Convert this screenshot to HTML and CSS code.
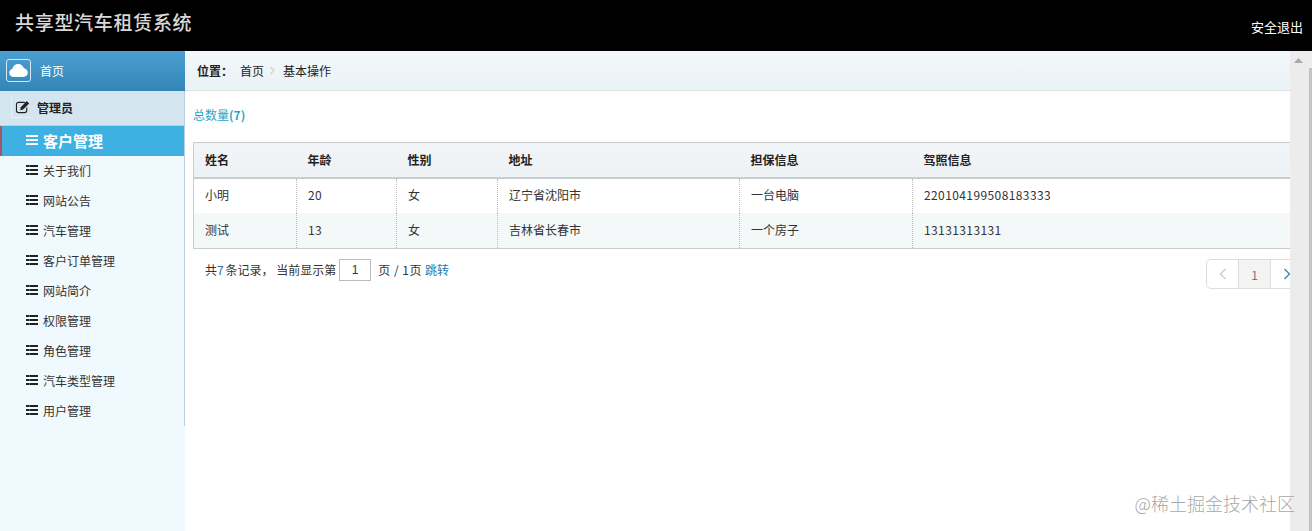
FILE: index.html
```html
<!DOCTYPE html>
<html lang="zh-CN">
<head>
<meta charset="utf-8">
<title>共享型汽车租赁系统</title>
<link rel="stylesheet" href="styles.css">
</head>
<body>
<header class="top">
  <h1 class="brand">共享型汽车租赁系统</h1>
  <a class="logout">安全退出</a>
</header>
<div class="frame">
  <aside class="side">
    <div class="side-home">
      <span class="cloud-box"><svg width="19" height="13" viewBox="0 0 20 14"><path fill="#fff" d="M5 14C2.200 14 0 12 0 9.400 0 7.200 1.500 5.500 3.500 5 4 2.200 6.600 0 9.700 0c2.900 0 5.300 1.800 6 4.400C18.200 5 20 7 20 9.500 20 12 18 14 15.300 14z"/></svg></span>
      <span>首页</span>
    </div>
    <div class="side-group">
      <svg class="edit-icon" viewBox="0 0 16 15"><path fill="none" stroke="#222" stroke-width="1.200" d="M10 2.500H3.200C2 2.500 1 3.500 1 4.700v6.600c0 1.200 1 2.200 2.200 2.200h6.600c1.200 0 2.200-1 2.200-2.200V8"/><path fill="#222" d="M5.600 7.800 12 1.200l2.600 2.600-6.500 6.500-3.100.6z"/></svg>
      <span>管理员</span>
    </div>
    <ul class="menu">
      <li class="menu-item active"><i class="list-icon"></i>客户管理</li>
      <li class="menu-item"><i class="list-icon"></i>关于我们</li>
      <li class="menu-item"><i class="list-icon"></i>网站公告</li>
      <li class="menu-item"><i class="list-icon"></i>汽车管理</li>
      <li class="menu-item"><i class="list-icon"></i>客户订单管理</li>
      <li class="menu-item"><i class="list-icon"></i>网站简介</li>
      <li class="menu-item"><i class="list-icon"></i>权限管理</li>
      <li class="menu-item"><i class="list-icon"></i>角色管理</li>
      <li class="menu-item"><i class="list-icon"></i>汽车类型管理</li>
      <li class="menu-item"><i class="list-icon"></i>用户管理</li>
    </ul>
  </aside>
  <main class="main">
    <div class="crumbs">
      <b class="crumb-label">位置：</b>
      <span>首页</span>
      <svg class="crumb-sep" width="5" height="9" viewBox="0 0 5 9"><path fill="none" stroke="#b5b5b5" d="M.5 1 4 4.500.5 8"/></svg>
      <span>基本操作</span>
    </div>
    <div class="content">
      <p class="total">总数量<b>(7)</b></p>
      <table class="grid">
        <thead>
          <tr><th class="c1">姓名</th><th class="c2">年龄</th><th class="c3">性别</th><th class="c4">地址</th><th class="c5">担保信息</th><th>驾照信息</th></tr>
        </thead>
        <tbody>
          <tr><td>小明</td><td class="digits">20</td><td>女</td><td>辽宁省沈阳市</td><td>一台电脑</td><td class="digits">220104199508183333</td></tr>
          <tr class="alt"><td>测试</td><td class="digits">13</td><td>女</td><td>吉林省长春市</td><td>一个房子</td><td class="digits">13131313131</td></tr>
        </tbody>
      </table>
      <div class="pager-row">
        <div class="pager-info">共<span class="num">7</span>条记录， 当前显示第<input class="page-input" value="1"><span class="page-text">页 / 1页</span><a class="jump">跳转</a></div>
        <div class="pager">
          <span class="pg"><svg width="8" height="12" viewBox="0 0 8 12"><path fill="none" stroke="#ccc" stroke-width="1.500" d="M6.500 1 1.500 6l5 5"/></svg></span>
          <span class="pg current">1</span>
          <span class="pg"><svg width="8" height="12" viewBox="0 0 8 12"><path fill="none" stroke="#3f8fc0" stroke-width="1.500" d="M1.500 1l5 5-5 5"/></svg></span>
        </div>
      </div>
    </div>
  </main>
  <div class="scrollbar">
    <svg class="scroll-arrow" width="9" height="5" viewBox="0 0 9 5"><path fill="#a9a9a9" d="M4.500 0 9 5H0z"/></svg>
    <div class="scroll-thumb"></div>
  </div>
</div>
<div class="watermark">@稀土掘金技术社区</div>
</body>
</html>
```
FILE: styles.css
```css
* { box-sizing: border-box; }
html, body { margin: 0; height: 100%; overflow: hidden; }
body {
  font-family: "Noto Sans CJK SC", "Liberation Sans", sans-serif;
  font-size: 12px;
  color: #222;
  background: #fff;
  display: flex;
  flex-direction: column;
}
.top {
  height: 51px;
  flex: none;
  background: #000;
  color: #fff;
  display: flex;
  justify-content: space-between;
  padding: 0 9px 0 15px;
}
.brand {
  margin: 9px 0 0;
  font-size: 19px;
  font-weight: 500;
  letter-spacing: .7px;
  line-height: 26px;
  color: #d8d8d8;
}
.logout { margin-top: 18px; font-size: 13px; line-height: 18px; }
.frame { flex: 1; display: flex; min-height: 0; }
.side {
  width: 185px;
  flex: none;
  background: #f0f9fd;
}
.side-home {
  height: 40px;
  display: flex;
  align-items: center;
  gap: 9px;
  padding: 0 0 2px 6px;
  color: #fff;
  background: linear-gradient(#4ba0d1, #3385b8);
}
.cloud-box {
  width: 25px;
  height: 23px;
  border: 1px solid #d5e8f3;
  border-radius: 3px;
  display: flex;
  align-items: center;
  justify-content: center;
}
.side-group {
  height: 35px;
  display: flex;
  align-items: center;
  gap: 4px;
  padding: 0 0 2px 11px;
  font-weight: 700;
  background: #d5e5f0;
  border-bottom: 1px solid #c2cfd8;
  border-right: 1px solid #bcd0dc;
}
.edit-icon {
  width: 22px;
  height: 21px;
  padding: 3px 2px 3px 3px;
  border-left: 1px solid #e6f0f6;
  border-bottom: 1px solid #e6f0f6;
}
.menu {
  list-style: none;
  margin: 0;
  padding: 0;
  border-right: 1px solid #bcd0dc;
}
.menu-item {
  height: 30px;
  display: flex;
  align-items: center;
  padding: 0 0 2px 26px;
  gap: 5px;
  color: #333;
}
.menu-item.active {
  background: #3eb0e2;
  color: #fff;
  font-size: 15px;
  font-weight: 700;
  border-left: 2px solid #a65468;
  padding-left: 24px;
}
.list-icon {
  width: 12px;
  height: 10px;
  flex: none;
  background: repeating-linear-gradient(#222 0 2px, transparent 2px 4px);
  mask-image: linear-gradient(90deg, #000 3px, rgba(0, 0, 0, .7) 3px 4px, #000 4px);
}
.active .list-icon { background: repeating-linear-gradient(#fff 0 2px, transparent 2px 4px); }
.main { flex: 1; min-width: 0; overflow: hidden; }
.crumbs {
  height: 40px;
  display: flex;
  align-items: center;
  padding-left: 12px;
  background: linear-gradient(#f3f8fa, #e9f2f6);
  border-bottom: 1px solid #dfe4e7;
}
.crumb-label { margin-right: 7px; font-family: "Noto Sans CJK TC", sans-serif; }
.crumb-sep { margin: 0 8px 0 6px; }
.content { width: 1118px; padding: 0 0 0 8px; }
.total { margin: 0; padding-top: 15px; height: 51px; line-height: 18px; color: #2aa5c9; }
.grid {
  width: 1110px;
  table-layout: fixed;
  border-collapse: collapse;
  border: 1px solid #c9cdd0;
}
.c1 { width: 103px; }
.c2 { width: 100px; }
.c3 { width: 101px; }
.c4 { width: 242px; }
.c5 { width: 173px; }
.grid th {
  height: 35px;
  padding: 0 11px;
  text-align: left;
  font-weight: 700;
  background: linear-gradient(#f2f5f7, #eef1f4);
  border-bottom: 2px solid #c7ced2;
}
.grid td {
  height: 35px;
  padding: 0 11px 2px;
  border-left: 1px dotted #bcbcbc;
  color: #333;
}
.grid td:first-child { border-left: 0; }
.grid .alt td { height: 36px; padding-bottom: 1px; }
.grid .digits { letter-spacing: .4px; }
.alt td { background: #f4f8f9; }
.pager-row {
  display: flex;
  justify-content: space-between;
  align-items: flex-start;
  height: 40px;
  padding: 10px 0 0 12px;
}
.pager-info { line-height: 22px; color: #333; display: flex; align-items: center; white-space: pre; }
.num { color: #2c6d99; letter-spacing: 1.800px; }
.page-input {
  width: 32px;
  height: 22px;
  margin: 0 7px 0 3px;
  text-align: center;
  font: 12px "Liberation Sans", sans-serif;
  border: 1px solid #bbb;
  padding: 0;
  color: #333;
}
.page-text { letter-spacing: .5px; margin-right: 3px; }
.jump { color: #2f77ab; }
.pager { display: flex; height: 30px; border: 1px solid #ddd; border-radius: 5px; }
.pg {
  width: 32px;
  display: flex;
  align-items: center;
  justify-content: center;
  border-left: 1px solid #ddd;
  color: #777;
}
.pg:first-child { border-left: 0; width: 31px; }
.pg.current { background: #f3f3f3; }
.scrollbar { width: 22px; flex: none; background: #ececec; position: relative; }
.scroll-arrow { position: absolute; left: 4px; top: 7px; }
.scroll-thumb { position: absolute; right: 0; top: 17px; width: 3px; bottom: 0; background: #c4c4c4; }
.watermark {
  position: absolute;
  right: 17px;
  bottom: 17px;
  font-size: 18px;
  font-weight: 300;
  line-height: 22px;
  color: rgba(125, 125, 125, .7);
}
```
